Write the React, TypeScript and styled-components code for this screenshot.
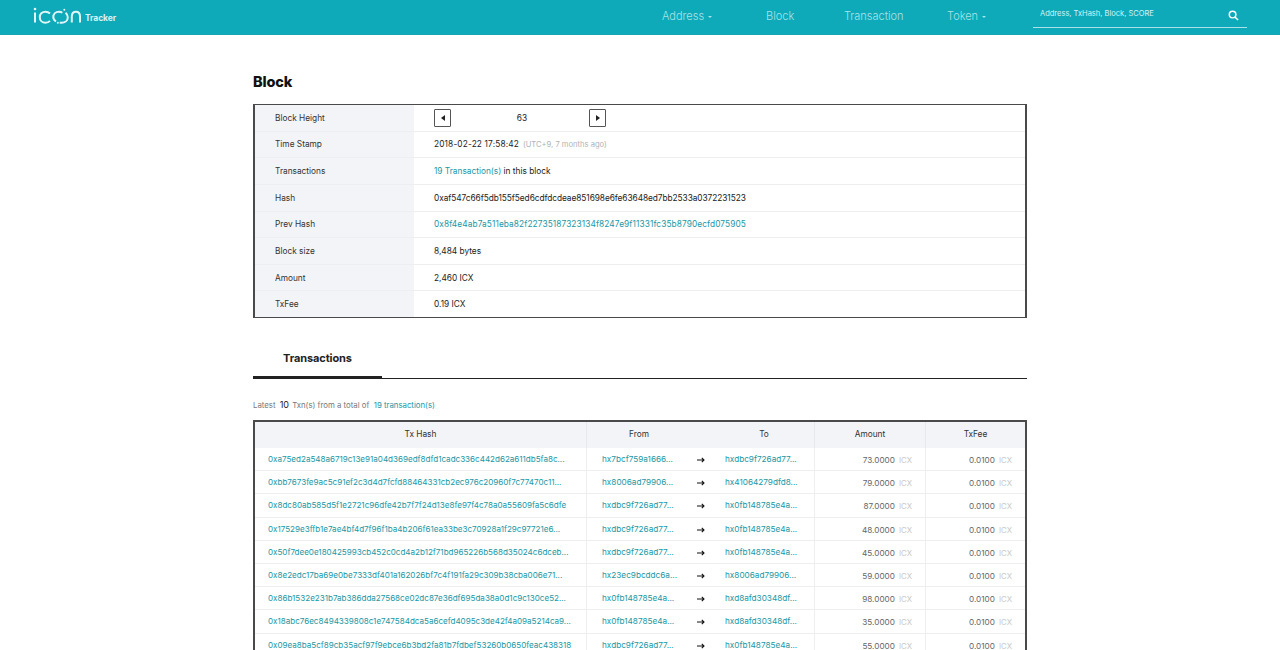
import React from 'react';
import styled, { createGlobalStyle } from 'styled-components';

const Global = createGlobalStyle`
  html, body { margin: 0; padding: 0; background: #fff; overflow: hidden; height: 650px; }
  body { font-family: Inter, "Liberation Sans", sans-serif; -webkit-font-smoothing: antialiased; }
  a { text-decoration: none; color: inherit; }
`;
const Page = styled.div`width: 1280px; height: 650px; overflow: hidden;`;
const Header = styled.header`
  height: 35px; box-sizing: border-box; background: #0eaab9; border-bottom: 1px solid #1ba3b1;
  display: flex; align-items: flex-start;
`;
const LogoWrap = styled.a`
  display: flex; align-items: flex-start; margin-left: 33px; margin-top: 6px; width: 611px;
`;
const Tracker = styled.span`font-size: 8.5px; font-weight: 700; color: #d9f3f5; margin: 7px 0 0 4px; letter-spacing: -0.1px;`;
const Nav = styled.nav`display: flex; font-size: 11px; color: #a5e3e8; margin-top: 9px; margin-left: 18px; font-weight: 300;`;
const NavItem = styled.a<{ $w: number }>`width: ${p => p.$w}px; line-height: 14px; white-space: nowrap;`;
const Caret = styled.i`
  display: inline-block; margin-left: 4px; vertical-align: 2px;
  border-left: 2px solid transparent; border-right: 2px solid transparent; border-top: 2.5px solid #a5e3e8;
`;
const Search = styled.div`
  width: 214px; height: 28px; box-sizing: border-box; border-bottom: 1px solid #a8e2e8;
  display: flex; justify-content: space-between; padding: 8px 8px 0 7px; font-size: 7.5px; color: #d5f2f5; line-height: 11px;
`;
const SearchIcon = styled.svg`width: 11px; height: 11px; margin-top: 2px; display: block;`;
const Main = styled.main`width: 774px; margin: 0 auto 0 253px; padding-top: 38px;`;
const Title = styled.h1`margin: 0; font-size: 14.5px; line-height: 17px; font-weight: 800; color: #111; letter-spacing: -0.15px;`;
const InfoTable = styled.div`margin-top: 14px; border: 2px solid #4a4a4a; border-width: 1.6px 2px; height: 214px; box-sizing: border-box; display: flex; flex-direction: column;`;
const InfoRow = styled.div`
  flex: 1; display: flex; border-bottom: 1px solid #eceef0; font-size: 8.3px; color: #222;
  &:last-child { border-bottom: none; }
`;
const InfoLabel = styled.div`width: 159px; background: #f3f4f7; padding-left: 20px; display: flex; align-items: center; box-sizing: border-box; color: #333;`;
const InfoValue = styled.div`padding-left: 20px; display: flex; align-items: center; flex: 1;`;
const HashText = styled.span`letter-spacing: -0.05px;`;
const PrevHash = styled.a`color: #1a97a5; letter-spacing: 0.1px;`;
const Stamp = styled.span`letter-spacing: 0.15px;`;
const Link = styled.a`color: #1a97a5;`;
const Faint = styled.span`color: #b2b2b2; margin-left: 4px; font-size: 7.6px;`;
const Stepper = styled.div`display: flex; align-items: center; width: 172px; justify-content: space-between;`;
const StepValue = styled.span`padding-left: 4px;`;
const StepBtn = styled.button`
  width: 17px; height: 18px; padding: 0; background: #fff; border: 1px solid #555; border-radius: 1px;
  display: flex; align-items: center; justify-content: center;
`;
const Tri = styled.i<{ $left?: boolean }>`
  display: block; border-top: 3px solid transparent; border-bottom: 3px solid transparent;
  ${p => (p.$left ? 'border-right: 4px solid #222;' : 'border-left: 4px solid #222;')}
`;
const Tabs = styled.div`margin-top: 25px; height: 35px; border-bottom: 1px solid #222; display: flex; align-items: flex-start;`;
const Tab = styled.a`
  width: 129px; height: 36px; box-sizing: border-box; border-bottom: 3px solid #222; text-align: center;
  font-size: 11px; font-weight: 700; color: #222; line-height: 30px; letter-spacing: -0.1px;
`;
const Latest = styled.p`margin: 20px 0 0; font-size: 7.8px; line-height: 11px; color: #777;`;
const Count = styled.b`font-weight: 400; color: #222; font-size: 9px; margin: 0 1px 0 2px;`;
const TxTable = styled.div`margin-top: 9px; border: 2px solid #4a4a4a; border-bottom: 0;`;
const Grid = '332px 228px 111px 99px';
const Head = styled.div`display: grid; grid-template-columns: ${Grid}; background: #f3f4f7; height: 26px; font-size: 8.3px; color: #333; line-height: 25px; text-align: center;`;
const HeadCell = styled.div<{ $pair?: boolean }>`
  border-right: 1px solid #e6e8eb; &:last-child { border-right: 0; }
  ${p => p.$pair && 'display: grid; grid-template-columns: 104px 22px 102px;'}
`;
const Row = styled.div`display: grid; grid-template-columns: ${Grid}; height: 23.2px; box-sizing: border-box; border-bottom: 1px solid #eceef0; font-size: 8.2px; line-height: 23px;`;
const HashCell = styled.div`padding-left: 13px; border-right: 1px solid #eceef0; color: #1a97a5; white-space: nowrap; overflow: hidden; font-size: 8.05px;`;
const Parties = styled.div`display: flex; border-right: 1px solid #eceef0; padding-left: 15px; color: #1a97a5;`;
const Party = styled.a`width: 90px;`;
const Arrow = styled.svg`width: 8px; height: 6px; margin: 9px 20px 0 6px; flex: none;`;
const Num = styled.div`border-right: 1px solid #eceef0; text-align: right; padding-right: 13px; color: #666; line-height: 25px; &:last-child { border-right: 0; padding-right: 13px; }`;
const Unit = styled.span`color: #c8c8c8; margin-left: 4px; font-size: 7.8px;`;

const rows = [
  ['0xa75ed2a548a6719c13e91a04d369edf8dfd1cadc336c442d62a611db5fa8c...', 'hx7bcf759a1666...', 'hxdbc9f726ad77...', '73.0000'],
  ['0xbb7673fe9ac5c91ef2c3d4d7fcfd88464331cb2ec976c20960f7c77470c11...', 'hx8006ad79906...', 'hx41064279dfd8...', '79.0000'],
  ['0x8dc80ab585d5f1e2721c96dfe42b7f7f24d13e8fe97f4c78a0a55609fa5c6dfe', 'hxdbc9f726ad77...', 'hx0fb148785e4a...', '87.0000'],
  ['0x17529e3ffb1e7ae4bf4d7f96f1ba4b206f61ea33be3c70928a1f29c97721e6...', 'hxdbc9f726ad77...', 'hx0fb148785e4a...', '48.0000'],
  ['0x50f7dee0e180425993cb452c0cd4a2b12f71bd965226b568d35024c6dceb...', 'hxdbc9f726ad77...', 'hx0fb148785e4a...', '45.0000'],
  ['0x8e2edc17ba69e0be7333df401a162026bf7c4f191fa29c309b38cba006e71...', 'hx23ec9bcddc6a...', 'hx8006ad79906...', '59.0000'],
  ['0x86b1532e231b7ab386dda27568ce02dc87e36df695da38a0d1c9c130ce52...', 'hx0fb148785e4a...', 'hxd8afd30348df...', '98.0000'],
  ['0x18abc76ec8494339808c1e747584dca5a6cefd4095c3de42f4a09a5214ca9...', 'hx0fb148785e4a...', 'hxd8afd30348df...', '35.0000'],
  ['0x09ea8ba5cf89cb35acf97f9ebce6b3bd2fa81b7fdbef53260b0650feac438318', 'hxdbc9f726ad77...', 'hx0fb148785e4a...', '55.0000'],
];

const Logo = () => (
  <svg width="48" height="18" viewBox="0 0 48 18" fill="none" stroke="#e2f6f8" strokeWidth="2">
    <path d="M2 6.500V16.500" />
    <circle cx="2" cy="3" r="1.300" fill="#e2f6f8" stroke="none" />
    <path d="M17 7.500C15.800 6.300 14.300 5.700 12.500 5.700 9 5.700 6.800 8 6.800 11.200S9 16.700 12.500 16.700c1.800 0 3.300-.6 4.500-1.800" />
    <path d="M23 15.300C21 14.200 20.300 12.700 20.300 11 20.300 8 22.700 5.700 26 5.700c1.300 0 2.400.3 3.300 1" />
    <path d="M32.500 6.800C34 8 34.800 9.500 34.800 11.200 34.800 14.400 32 16.700 28.500 16.700c-.6 0-1.200-.1-1.800-.2" />
    <circle cx="31.300" cy="3.800" r="1" fill="#e2f6f8" stroke="none" />
    <circle cx="24.800" cy="16.800" r="1" fill="#e2f6f8" stroke="none" />
    <path d="M38.800 16.500V10.500C38.800 7.500 40.300 5.700 43 5.700S47 7.500 47 10.500V16.500" />
  </svg>
);

export default function App() {
  return (
    <Page>
      <Global />
      <Header>
        <LogoWrap href="#"><Logo /><Tracker>Tracker</Tracker></LogoWrap>
        <Nav>
          <NavItem $w={104}>Address<Caret /></NavItem>
          <NavItem $w={78}>Block</NavItem>
          <NavItem $w={103}>Transaction</NavItem>
          <NavItem $w={86}>Token<Caret /></NavItem>
        </Nav>
        <Search>
          <span>Address, TxHash, Block, SCORE</span>
          <SearchIcon viewBox="0 0 12 12" fill="none" stroke="#fff" strokeWidth="1.6"><circle cx="5" cy="5" r="3.600" /><path d="M7.800 7.800L11 11" /></SearchIcon>
        </Search>
      </Header>
      <Main>
        <Title>Block</Title>
        <InfoTable>
          <InfoRow><InfoLabel>Block Height</InfoLabel><InfoValue><Stepper><StepBtn><Tri $left /></StepBtn><StepValue>63</StepValue><StepBtn><Tri /></StepBtn></Stepper></InfoValue></InfoRow>
          <InfoRow><InfoLabel>Time Stamp</InfoLabel><InfoValue><Stamp>2018-02-22 17:58:42</Stamp><Faint>(UTC+9, 7 months ago)</Faint></InfoValue></InfoRow>
          <InfoRow><InfoLabel>Transactions</InfoLabel><InfoValue><span><Link href="#">19 Transaction(s)</Link> in this block</span></InfoValue></InfoRow>
          <InfoRow><InfoLabel>Hash</InfoLabel><InfoValue><HashText>0xaf547c66f5db155f5ed6cdfdcdeae851698e6fe63648ed7bb2533a0372231523</HashText></InfoValue></InfoRow>
          <InfoRow><InfoLabel>Prev Hash</InfoLabel><InfoValue><PrevHash href="#">0x8f4e4ab7a511eba82f22735187323134f8247e9f11331fc35b8790ecfd075905</PrevHash></InfoValue></InfoRow>
          <InfoRow><InfoLabel>Block size</InfoLabel><InfoValue>8,484 bytes</InfoValue></InfoRow>
          <InfoRow><InfoLabel>Amount</InfoLabel><InfoValue>2,460 ICX</InfoValue></InfoRow>
          <InfoRow><InfoLabel>TxFee</InfoLabel><InfoValue>0.19 ICX</InfoValue></InfoRow>
        </InfoTable>
        <Tabs><Tab href="#">Transactions</Tab></Tabs>
        <Latest>Latest <Count>10</Count> Txn(s) from a total of <Link href="#">&nbsp;19 transaction(s)</Link></Latest>
        <TxTable>
          <Head>
            <HeadCell>Tx Hash</HeadCell>
            <HeadCell $pair><span>From</span><span /><span>To</span></HeadCell>
            <HeadCell>Amount</HeadCell>
            <HeadCell>TxFee</HeadCell>
          </Head>
          {rows.map(r => (
            <Row key={r[0]}>
              <HashCell>{r[0]}</HashCell>
              <Parties>
                <Party href="#">{r[1]}</Party>
                <Arrow viewBox="0 0 8 6" fill="none" stroke="#111" strokeWidth="1.1"><path d="M0 3H7M4.800 .8L7 3L4.800 5.200" /></Arrow>
                <Party href="#">{r[2]}</Party>
              </Parties>
              <Num>{r[3]}<Unit>ICX</Unit></Num>
              <Num>0.0100<Unit>ICX</Unit></Num>
            </Row>
          ))}
        </TxTable>
      </Main>
    </Page>
  );
}
